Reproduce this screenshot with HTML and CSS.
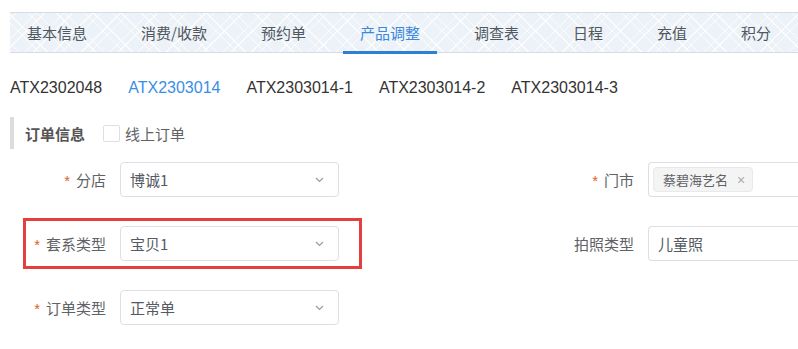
FILE: index.html
```html
<!DOCTYPE html>
<html lang="zh-CN">
<head>
  <meta charset="UTF-8" />
  <title>产品调整</title>
  <link rel="stylesheet" href="styles.css">
</head>
<body>
  <div class="tabs">
    <div class="tab">基本信息</div>
    <div class="tab">消费/收款</div>
    <div class="tab">预约单</div>
    <div class="tab active">产品调整</div>
    <div class="tab">调查表</div>
    <div class="tab">日程</div>
    <div class="tab">充值</div>
    <div class="tab">积分</div>
  </div>

  <div class="orders">
    <span class="order">ATX2302048</span>
    <span class="order current">ATX2303014</span>
    <span class="order">ATX2303014-1</span>
    <span class="order">ATX2303014-2</span>
    <span class="order">ATX2303014-3</span>
  </div>

  <div class="section-title">
    <span class="title-text">订单信息</span>
    <label class="check"><span class="check-box"></span>线上订单</label>
  </div>

  <div class="form">
    <div class="form-item">
      <label class="item-label"><span class="req">*</span>分店</label>
      <div class="select">
        <span>博诚1</span>
        <svg class="arrow" width="9" height="6" viewBox="0 0 9 6"><path d="M1 1l3.5 3.5L8 1" fill="none" stroke="#9a9ca3" stroke-width="1.2"/></svg>
      </div>
    </div>
    <div class="form-item">
      <label class="item-label"><span class="req">*</span>门市</label>
      <div class="select wide">
        <span class="tag">蔡碧海艺名<span class="tag-close">×</span></span>
      </div>
    </div>

    <div class="form-item">
      <div class="highlight"></div>
      <label class="item-label"><span class="req">*</span>套系类型</label>
      <div class="select">
        <span>宝贝1</span>
        <svg class="arrow" width="9" height="6" viewBox="0 0 9 6"><path d="M1 1l3.5 3.5L8 1" fill="none" stroke="#9a9ca3" stroke-width="1.2"/></svg>
      </div>
    </div>
    <div class="form-item">
      <label class="item-label">拍照类型</label>
      <div class="select wide">
        <span class="value">儿童照</span>
      </div>
    </div>

    <div class="form-item">
      <label class="item-label"><span class="req">*</span>订单类型</label>
      <div class="select">
        <span>正常单</span>
        <svg class="arrow" width="9" height="6" viewBox="0 0 9 6"><path d="M1 1l3.5 3.5L8 1" fill="none" stroke="#9a9ca3" stroke-width="1.2"/></svg>
      </div>
    </div>
  </div>
</body>
</html>
```

FILE: styles.css
```css
body {
  margin: 0;
  padding: 12px 0 0 10px;
  background: #fff;
  font-family: "Liberation Sans", "Noto Sans CJK SC", sans-serif;
  color: #333;
  overflow: hidden;
}

.tabs {
  display: flex;
  gap: 20px;
  height: 39px;
  border-top: 1px solid #d6dce3;
  border-bottom: 1px solid #d6dce3;
  background-color: #edf2f8;
  background-image:
    repeating-linear-gradient(45deg, rgba(255,255,255,0.75) 0 1px, transparent 1px 6px, rgba(255,255,255,0.75) 6px 7px, transparent 7px 20px),
    repeating-linear-gradient(-45deg, rgba(255,255,255,0.75) 0 1px, transparent 1px 6px, rgba(255,255,255,0.75) 6px 7px, transparent 7px 20px);
}
.tab {
  position: relative;
  padding: 0 17px;
  line-height: 39px;
  font-size: 15px;
  font-family: "Noto Sans CJK SC", "Liberation Sans", sans-serif;
  color: #4f5760;
}
.tab.active {
  color: #3a88dc;
}
.tab.active::after {
  content: "";
  position: absolute;
  left: 0;
  right: 0;
  bottom: -2px;
  height: 3px;
  background: #2f7fd6;
}

.orders {
  display: flex;
  gap: 26px;
  margin-top: 23px;
  line-height: 24px;
  font-size: 16px;
}
.order {
  color: #333;
}
.order.current {
  color: #3a8ee6;
}

.section-title {
  display: flex;
  align-items: center;
  margin-top: 17px;
  height: 32px;
  border-left: 4px solid #dcdcdc;
  padding-left: 11px;
  font-family: "Noto Sans CJK SC", sans-serif;
}
.title-text {
  font-size: 15px;
  font-weight: bold;
  color: #555;
}
.check {
  display: flex;
  align-items: center;
  margin-left: 18px;
  font-size: 15px;
  color: #606266;
}
.check-box {
  width: 15px;
  height: 15px;
  border: 1px solid #dcdfe6;
  border-radius: 2px;
  margin-right: 5px;
  background: #fff;
}

.form {
  display: grid;
  grid-template-columns: 528px 1fr;
  row-gap: 29px;
  margin-top: 13px;
}
.form-item {
  position: relative;
  display: flex;
  align-items: center;
  height: 35px;
}
.item-label {
  flex: none;
  width: 110px;
  padding-right: 14px;
  box-sizing: border-box;
  text-align: right;
  font-size: 15px;
  font-family: "Noto Sans CJK SC", sans-serif;
  color: #606266;
}
.req {
  color: #e2602c;
  margin-right: 6px;
  font-family: "Liberation Sans", sans-serif;
}
.select {
  display: flex;
  align-items: center;
  justify-content: space-between;
  width: 219px;
  height: 35px;
  box-sizing: border-box;
  padding: 0 14px 0 9px;
  border: 1px solid #dcdfe6;
  border-radius: 4px;
  font-size: 15px;
  font-family: "Noto Sans CJK SC", sans-serif;
  color: #555a62;
}
.select.wide {
  flex: 1;
  width: auto;
  padding-left: 4px;
  justify-content: flex-start;
  border-right: none;
  border-radius: 4px 0 0 4px;
}
.select .value {
  padding-left: 5px;
}
.arrow {
  display: block;
}
.tag {
  display: flex;
  align-items: center;
  height: 25px;
  box-sizing: border-box;
  padding: 0 7px 0 9px;
  background: #f4f4f5;
  border: 1px solid #e9e9eb;
  border-radius: 4px;
  font-size: 13px;
  color: #606266;
}
.tag-close {
  margin-left: 9px;
  font-size: 14px;
  color: #a8abb2;
  font-family: "Liberation Sans", sans-serif;
}

.highlight {
  position: absolute;
  left: 13px;
  top: -8px;
  width: 339px;
  height: 51px;
  box-sizing: border-box;
  border: 3px solid #e53e3e;
}
```
